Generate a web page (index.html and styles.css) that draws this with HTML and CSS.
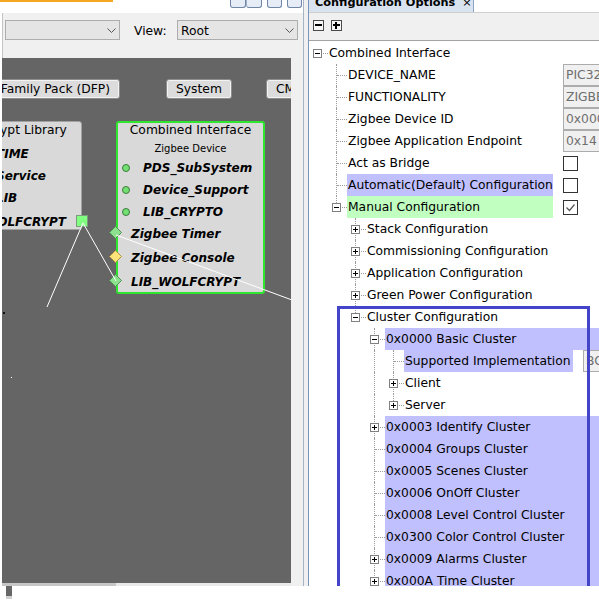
FILE: index.html
```html
<!DOCTYPE html>
<html lang="en">
<head>
    <meta charset="UTF-8">
    <title>Project Graph - Configuration Options</title>
    <link rel="stylesheet" href="styles.css">
</head>
<body>
<div class="app">
    <div class="left">
        <div class="left-top">
            <div class="orange-tab"></div>
            <div class="win-btns">
                <span class="win-btn"></span><span class="win-btn joined"></span>
                <span class="win-btn small"></span>
                <span class="win-btn small"></span>
            </div>
        </div>
        <div class="left-body">
            <div class="graph-toolbar">
                <div class="combo combo-blank">
                    <span></span>
                    <svg class="chev" viewBox="0 0 9 5"><polyline points="0.5,0.5 4.5,4.5 8.5,0.5" fill="none" stroke="#555"/></svg>
                </div>
                <span class="view-label">View:</span>
                <div class="combo combo-view">
                    <span>Root</span>
                    <svg class="chev" viewBox="0 0 9 5"><polyline points="0.5,0.5 4.5,4.5 8.5,0.5" fill="none" stroke="#555"/></svg>
                </div>
            </div>
            <div class="graph-row">
                <div class="graph-col">
                    <div class="canvas">
                        <div class="gbtn btn-dfp">Device Family Pack (DFP)</div>
                        <div class="gbtn btn-system">System</div>
                        <div class="gbtn btn-cmsis">CMSIS Pack</div>

                        <div class="node crypto">
                            <div class="node-title">wolfCrypt Library</div>
                            <div class="item">TIME</div>
                            <div class="item">Service</div>
                            <div class="item">LIB</div>
                            <div class="item cap">WOLFCRYPT</div>
                        </div>
                        <div class="port-sq"></div>

                        <div class="node selected combined">
                            <div class="node-title">Combined Interface</div>
                            <div class="node-sub">Zigbee Device</div>
                            <div class="item"><span class="dot"></span>PDS_SubSystem</div>
                            <div class="item"><span class="dot"></span>Device_Support</div>
                            <div class="item"><span class="dot"></span>LIB_CRYPTO</div>
                            <div class="item dep first">
                                <svg class="diamond" viewBox="0 0 13 13"><polygon points="6.5,0.5 12.5,6.5 6.5,12.5 0.5,6.5" fill="#8de08d" stroke="#4f8f4f"/></svg>
                                Zigbee Timer
                            </div>
                            <div class="item dep">
                                <svg class="diamond" viewBox="0 0 13 13"><polygon points="6.5,0.5 12.5,6.5 6.5,12.5 0.5,6.5" fill="#ffe27a" stroke="#a89440"/></svg>
                                Zigbee Console
                            </div>
                            <div class="item dep">
                                <svg class="diamond" viewBox="0 0 13 13"><polygon points="6.5,0.5 12.5,6.5 6.5,12.5 0.5,6.5" fill="#8de08d" stroke="#4f8f4f"/></svg>
                                LIB_WOLFCRYPT
                            </div>
                        </div>

                        <svg class="wires" width="289" height="525">
                            <line x1="81" y1="165" x2="45" y2="249" stroke="#fff"/>
                            <line x1="81" y1="165" x2="114" y2="223" stroke="#fff"/>
                            <line x1="114" y1="177" x2="290" y2="242" stroke="#fff"/>
                            <rect x="1" y="254" width="2" height="2" fill="#111"/>
                            <rect x="9" y="319" width="1" height="1" fill="#fff"/>
                        </svg>
                    </div>
                    <div class="hscroll"><div class="hthumb"></div></div>
                </div>
                <div class="vstrip"></div>
            </div>
        </div>
    </div>

    <div class="divider"></div>

    <div class="right">
        <div class="tabs">
            <div class="tab">Configuration Options<span class="tab-close">×</span></div>
        </div>
        <div class="cfg-toolbar">
            <span class="tb-btn"></span>
            <span class="tb-btn plus"></span>
        </div>
        <div class="tree">
            <div class="row"><span class="c r"><i class="x"></i></span><span class="lbl">Combined Interface</span></div>
            <div class="row"><span class="c"></span><span class="c t"></span><span class="lbl">DEVICE_NAME</span>
                <span class="ctl"><span class="field">PIC32CX1012BZ25048</span></span></div>
            <div class="row"><span class="c"></span><span class="c t"></span><span class="lbl">FUNCTIONALITY</span>
                <span class="ctl"><span class="field">ZIGBEE_COMBINED_INTERFACE</span></span></div>
            <div class="row"><span class="c"></span><span class="c t"></span><span class="lbl">Zigbee Device ID</span>
                <span class="ctl"><span class="field">0x0007</span></span></div>
            <div class="row"><span class="c"></span><span class="c t"></span><span class="lbl">Zigbee Application Endpoint</span>
                <span class="ctl"><span class="field">0x14</span></span></div>
            <div class="row"><span class="c"></span><span class="c t"></span><span class="lbl">Act as Bridge</span>
                <span class="ctl"><span class="chk"></span></span></div>
            <div class="row"><span class="c"></span><span class="c t"></span><span class="lbl col sel-blue">Automatic(Default) Configuration</span>
                <span class="ctl"><span class="chk"></span></span></div>
            <div class="row"><span class="c"></span><span class="c l"><i class="x"></i></span><span class="lbl col sel-green">Manual Configuration</span>
                <span class="ctl"><span class="chk"><svg width="13" height="13" viewBox="0 0 13 13"><polyline points="2.5,6.5 5.5,9.5 10.5,3.5" fill="none" stroke="#555" stroke-width="1.2"/></svg></span></span></div>
            <div class="row"><span class="c"></span><span class="c"></span><span class="c t"><i class="x plus"></i></span><span class="lbl">Stack Configuration</span></div>
            <div class="row"><span class="c"></span><span class="c"></span><span class="c t"><i class="x plus"></i></span><span class="lbl">Commissioning Configuration</span></div>
            <div class="row"><span class="c"></span><span class="c"></span><span class="c t"><i class="x plus"></i></span><span class="lbl">Application Configuration</span></div>
            <div class="row"><span class="c"></span><span class="c"></span><span class="c t"><i class="x plus"></i></span><span class="lbl">Green Power Configuration</span></div>
            <div class="row"><span class="c"></span><span class="c"></span><span class="c l"><i class="x"></i></span><span class="lbl">Cluster Configuration</span></div>
            <div class="row"><span class="c"></span><span class="c"></span><span class="c"></span><span class="c t"><i class="x"></i></span><span class="lbl span sel-blue">0x0000 Basic Cluster</span></div>
            <div class="row"><span class="c"></span><span class="c"></span><span class="c"></span><span class="c v"></span><span class="c t"></span><span class="lbl impl sel-blue">Supported Implementation</span>
                <span class="field impl-value">BOTH</span></div>
            <div class="row"><span class="c"></span><span class="c"></span><span class="c"></span><span class="c v"></span><span class="c t"><i class="x plus"></i></span><span class="lbl">Client</span></div>
            <div class="row"><span class="c"></span><span class="c"></span><span class="c"></span><span class="c v"></span><span class="c l"><i class="x plus"></i></span><span class="lbl">Server</span></div>
            <div class="row"><span class="c"></span><span class="c"></span><span class="c"></span><span class="c t"><i class="x plus"></i></span><span class="lbl span sel-blue">0x0003 Identify Cluster</span></div>
            <div class="row"><span class="c"></span><span class="c"></span><span class="c"></span><span class="c t"></span><span class="lbl span sel-blue">0x0004 Groups Cluster</span></div>
            <div class="row"><span class="c"></span><span class="c"></span><span class="c"></span><span class="c t"></span><span class="lbl span sel-blue">0x0005 Scenes Cluster</span></div>
            <div class="row"><span class="c"></span><span class="c"></span><span class="c"></span><span class="c t"></span><span class="lbl span sel-blue">0x0006 OnOff Cluster</span></div>
            <div class="row"><span class="c"></span><span class="c"></span><span class="c"></span><span class="c t"></span><span class="lbl span sel-blue">0x0008 Level Control Cluster</span></div>
            <div class="row"><span class="c"></span><span class="c"></span><span class="c"></span><span class="c t"></span><span class="lbl span sel-blue">0x0300 Color Control Cluster</span></div>
            <div class="row"><span class="c"></span><span class="c"></span><span class="c"></span><span class="c t"><i class="x plus"></i></span><span class="lbl span sel-blue">0x0009 Alarms Cluster</span></div>
            <div class="row"><span class="c"></span><span class="c"></span><span class="c"></span><span class="c t"><i class="x plus"></i></span><span class="lbl span sel-blue">0x000A Time Cluster</span></div>

            <div class="focus-box"></div>
        </div>
    </div>
</div>
<div class="status"><span class="status-block"></span></div>
</body>
</html>
```

FILE: styles.css
```css
body {
    margin: 0;
    font-family: "DejaVu Sans", Verdana, sans-serif;
    font-size: 12.3px;
    color: #000;
    background: #fff;
    overflow: hidden;
}
.app {
    display: flex;
    width: 599px;
    height: 586px;
}

/* project graph (left) */
.left {
    width: 303px;
    flex: none;
    display: flex;
    flex-direction: column;
}
.left-top {
    height: 13px;
    display: flex;
    justify-content: space-between;
    align-items: flex-start;
}
.orange-tab {
    width: 113px;
    height: 2px;
    background: #f5a623;
}
.win-btns {
    display: flex;
    margin-right: 1px;
}
.win-btn {
    width: 16px;
    height: 8px;
    box-sizing: border-box;
    border: 1px solid #6f86a6;
    border-top: none;
    border-radius: 0 0 3px 3px;
    background: #e6edf6;
}
.win-btn.joined {
    border-left: 1px solid #9fb0c8;
}
.win-btn.small {
    width: 15px;
    margin-left: 5px;
}
.left-body {
    flex: 1;
    margin-left: 2px;
    display: flex;
    flex-direction: column;
}
.graph-toolbar {
    height: 45px;
    box-sizing: border-box;
    padding: 7px 0 0 2px;
    border-left: 1px solid #c4c4c4;
    background: #f0f0f0;
    display: flex;
    align-items: flex-start;
}
.combo {
    height: 20px;
    box-sizing: border-box;
    border: 1px solid #adadad;
    background: #e5e5e5;
    display: flex;
    align-items: center;
    justify-content: space-between;
    padding: 1px 3px 0 3px;
}
.combo-blank {
    width: 115px;
}
.combo-view {
    width: 121px;
}
.view-label {
    margin-left: 14px;
    width: 43px;
    padding-top: 1px;
    line-height: 20px;
}
.chev {
    width: 9px;
    height: 5px;
}
.graph-row {
    flex: 1;
    display: flex;
}
.graph-col {
    width: 289px;
    display: flex;
    flex-direction: column;
}
.canvas {
    flex: 1;
    position: relative;
    overflow: hidden;
    background: #656565;
}
.hscroll {
    height: 3px;
    background: #e9e9e9;
}
.hthumb {
    width: 114px;
    height: 3px;
    background: #c6c6c6;
}
.vstrip {
    flex: 1;
    background: #f0f0f0;
}

/* graph nodes */
.gbtn {
    position: absolute;
    top: 21px;
    height: 20px;
    box-sizing: border-box;
    padding: 1px 9px 0;
    border: 1px solid #8c8c8c;
    border-radius: 3px;
    background: #dcdcdc;
    box-shadow: inset 0 0 0 1px #f3f3f3;
    line-height: 17px;
    white-space: nowrap;
}
.btn-dfp {
    right: 171px;
}
.btn-system {
    left: 164px;
}
.btn-cmsis {
    left: 264px;
}
.node {
    position: absolute;
    box-sizing: border-box;
    padding-top: 1px;
    background: #d9d9d9;
    border: 1px solid #a2a2a2;
    border-radius: 3px;
}
.node.selected {
    border: 2px solid #2ee62e;
}
.node-title {
    text-align: center;
    white-space: nowrap;
    line-height: 14px;
}
.crypto {
    left: -56px;
    top: 63px;
    width: 136px;
    height: 109px;
}
.crypto .node-title {
    margin-bottom: 6px;
}
.combined {
    left: 114px;
    top: 63px;
    width: 149px;
    height: 173px;
}
.combined .node-title {
    line-height: 12px;
}
.node-sub {
    font-size: 10px;
    line-height: 14px;
    margin: 6px 0 1px;
    text-align: center;
}
.item {
    position: relative;
    display: flex;
    align-items: center;
    height: 22px;
    font-size: 12px;
    font-weight: bold;
    font-style: italic;
    white-space: nowrap;
}
.crypto .item {
    padding-left: 49px;
}
.crypto .item.cap {
    padding-left: 37px;
    margin-top: 2px;
}
.dot {
    width: 8px;
    height: 8px;
    box-sizing: border-box;
    border-radius: 50%;
    border: 1px solid #3d7a3d;
    background: #72e072;
    margin: -1px 13px 0 4px;
}
.item.dep {
    height: 24px;
    padding-left: 13px;
}
.item.dep.first {
    margin-top: -1px;
}
.diamond {
    position: absolute;
    left: -9px;
    top: 4px;
    width: 13px;
    height: 13px;
}
.port-sq {
    position: absolute;
    left: 74px;
    top: 157px;
    width: 12px;
    height: 12px;
    box-sizing: border-box;
    border: 1px solid #7c9a7c;
    background: #80ff80;
}
.wires {
    position: absolute;
    left: 0;
    top: 0;
}

.divider {
    width: 4px;
    flex: none;
    border-left: 1px solid #a6b4c6;
    background: #f0f0f0;
}

/* configuration options (right) */
.right {
    flex: 1;
    min-width: 0;
    border-left: 1px solid #7a95bb;
    display: flex;
    flex-direction: column;
    overflow: hidden;
}
.tabs {
    height: 12px;
    border-bottom: 1px solid #cfcfcf;
    display: flex;
}
.tab {
    width: 158px;
    height: 12px;
    padding-left: 6px;
    border-right: 1px solid #8ca4c6;
    background: #d9e3f0;
    font-size: 11.3px;
    font-weight: bold;
    line-height: 5px;
    white-space: nowrap;
    overflow: hidden;
}
.tab-close {
    margin-left: 7px;
    font-weight: normal;
}
.cfg-toolbar {
    height: 27px;
    box-sizing: border-box;
    padding: 7px 0 0 4px;
    background: #f0f0f0;
    display: flex;
    gap: 7px;
}
.tb-btn {
    position: relative;
    width: 11px;
    height: 11px;
    box-sizing: border-box;
    border: 1px solid #4a4a4a;
    background: #f7f7f7;
}
.tb-btn::before {
    content: "";
    position: absolute;
    left: 1px;
    top: 3px;
    width: 7px;
    height: 2px;
    background: #000;
}
.tb-btn.plus::after {
    content: "";
    position: absolute;
    left: 3px;
    top: 1px;
    width: 2px;
    height: 7px;
    background: #000;
}
.tree {
    flex: 1;
    position: relative;
    overflow: hidden;
    border-top: 1px solid #a3a3a3;
    padding-top: 1px;
}
.row {
    display: flex;
    height: 22px;
}
.c {
    position: relative;
    width: 19px;
    flex: none;
}
.c.t::before, .c.l::before, .c.v::before {
    content: "";
    position: absolute;
    left: 8px;
    top: 0;
    bottom: 0;
    border-left: 1px dotted #9c9c9c;
}
.c.l::before {
    bottom: 11px;
}
.c.t::after, .c.l::after, .c.r::after {
    content: "";
    position: absolute;
    left: 9px;
    right: 0;
    top: 11px;
    border-top: 1px dotted #9c9c9c;
}
.x {
    position: absolute;
    left: 4px;
    top: 7px;
    width: 9px;
    height: 9px;
    box-sizing: border-box;
    border: 1px solid #808080;
    background: #fff;
    z-index: 1;
}
.x::before {
    content: "";
    position: absolute;
    left: 1px;
    top: 3px;
    width: 5px;
    height: 1px;
    background: #000;
}
.x.plus::after {
    content: "";
    position: absolute;
    left: 3px;
    top: 1px;
    width: 1px;
    height: 5px;
    background: #000;
}
.lbl {
    padding: 1px 0 0 1px;
    line-height: 21px;
    white-space: nowrap;
}
.lbl.col {
    width: 205px;
    flex: none;
}
.lbl.impl {
    width: 168px;
    flex: none;
}
.lbl.span {
    flex: 1;
}
.sel-blue {
    background: #c0c0ff;
}
.sel-green {
    background: #c0ffc0;
}
.ctl {
    margin-left: auto;
    width: 36px;
    flex: none;
    display: flex;
    align-items: center;
}
.field {
    flex: none;
    width: 80px;
    height: 22px;
    box-sizing: border-box;
    padding: 1px 0 0 2px;
    border: 1px solid #acacac;
    background: #f0f0f0;
    color: #6e6e6e;
    line-height: 19px;
    white-space: nowrap;
    overflow: hidden;
}
.field.impl-value {
    margin-left: 10px;
}
.chk {
    width: 15px;
    height: 15px;
    box-sizing: border-box;
    border: 1px solid #333;
    background: #fff;
}
.chk svg {
    display: block;
}
.focus-box {
    position: absolute;
    left: 28px;
    top: 265px;
    width: 253px;
    height: 400px;
    box-sizing: border-box;
    border: 3px solid #4444c8;
    pointer-events: none;
}

.status {
    height: 14px;
    padding-left: 6px;
}
.status-block {
    display: block;
    width: 6px;
    height: 10px;
    background: #676767;
    border-bottom: 3px solid #d0d0d0;
}
```
